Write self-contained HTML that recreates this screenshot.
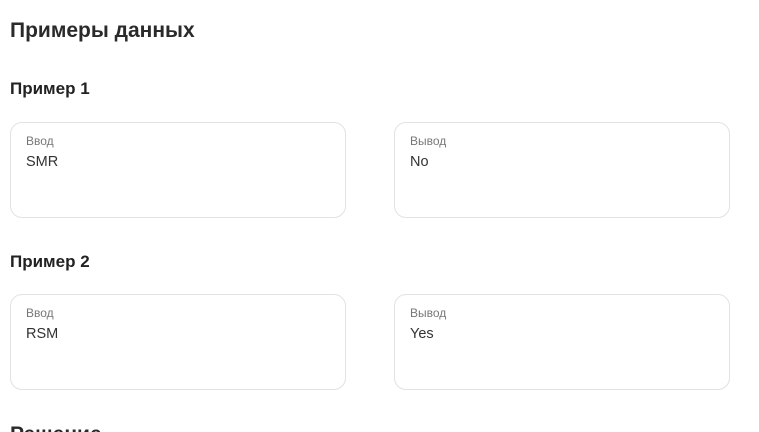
<!DOCTYPE html>
<html><head><meta charset="utf-8"><style>
html,body{margin:0;width:759px;height:432px;overflow:hidden}
body{background:#fff;font-family:"Liberation Sans",sans-serif;color:#222;position:relative}
.t{position:absolute;left:10px;font-weight:bold}
.box{position:absolute;border:1px solid #e2e2e2;border-radius:12px;box-sizing:border-box;background:#fff}
.l{position:absolute;left:15px;top:11px;font-size:12px;color:#777}
.v{position:absolute;left:15px;top:31px;font-size:14.5px;color:#333}
</style></head><body>
<div class="t" style="top:19px;font-size:21px;color:#2a2a2a">Примеры данных</div>
<div class="t" style="top:79px;font-size:17px">Пример 1</div>
<div class="box" style="left:10px;top:122px;width:336px;height:96px"><div class="l">Ввод</div><div class="v">SMR</div></div>
<div class="box" style="left:394px;top:122px;width:336px;height:96px"><div class="l">Вывод</div><div class="v">No</div></div>
<div class="t" style="top:252px;font-size:17px">Пример 2</div>
<div class="box" style="left:10px;top:294px;width:336px;height:96px"><div class="l">Ввод</div><div class="v">RSM</div></div>
<div class="box" style="left:394px;top:294px;width:336px;height:96px"><div class="l">Вывод</div><div class="v">Yes</div></div>
<div class="t" style="top:423px;font-size:21px;color:#2a2a2a">Решение</div>
</body></html>
